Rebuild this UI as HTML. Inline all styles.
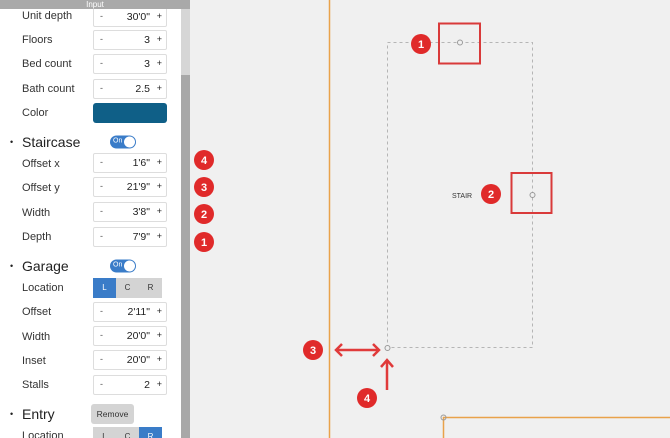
<!DOCTYPE html>
<html><head><style>
*{margin:0;padding:0;box-sizing:border-box}
body{width:670px;height:438px;overflow:hidden;background:#f0f0f0;font-family:"Liberation Sans",sans-serif;position:relative}
#side{position:absolute;left:0;top:0;width:181px;height:438px;background:#fff;overflow:hidden}
#sb{position:absolute;left:181px;top:9px;width:9px;height:429px;background:#d6d6d6}
#thumb{position:absolute;left:181px;top:75px;width:9px;height:363px;background:#a8a8a8}
#hdr{position:absolute;left:0;top:0;width:190px;height:9px;background:#a9a9a9;color:#fff;font-size:8px;line-height:9px;text-align:center}
.l{position:absolute;left:22px;font-size:11px;color:#333;transform:translateY(-50%)}
.h{position:absolute;left:22px;font-size:14px;color:#222;transform:translateY(-50%)}
.dot{position:absolute;left:10px;font-size:9px;color:#222;transform:translateY(-50%)}
.in{position:absolute;left:93px;width:74px;height:20px;border:1px solid #ddd;border-radius:2px;font-size:10.5px;color:#222;transform:translateY(-50%)}
.in .m{position:absolute;left:6px;top:3px;font-size:9px;color:#555}
.in .v{position:absolute;right:16px;top:3px}
.in .p{position:absolute;right:4px;top:3px;font-size:9px}
.tg{position:absolute;left:110px;width:26px;height:13px;border-radius:7px;background:#3a7cc8;transform:translateY(-50%)}
.tg span{position:absolute;left:3px;top:2px;font-size:7px;color:#fff}
.tg i{position:absolute;right:1px;top:1px;width:11px;height:11px;border-radius:50%;background:#fff}
.seg{position:absolute;left:93px;height:20px;display:flex;transform:translateY(-50%)}
.seg div{width:23px;height:20px;background:#d4d4d4;font-size:8px;color:#333;text-align:center;line-height:20px}
.seg .a{background:#3a7cc8;color:#fff}
</style></head><body>
<div id="side">
<div class="in" style="top:17px"><span class="m">-</span><span class="v">30'0"</span><span class="p">+</span></div>
<div class="l" style="top:16px">Unit depth</div>
<div class="l" style="top:40px">Floors</div><div class="in" style="top:40px"><span class="m">-</span><span class="v">3</span><span class="p">+</span></div>
<div class="l" style="top:64px">Bed count</div><div class="in" style="top:64px"><span class="m">-</span><span class="v">3</span><span class="p">+</span></div>
<div class="l" style="top:89px">Bath count</div><div class="in" style="top:89px"><span class="m">-</span><span class="v">2.5</span><span class="p">+</span></div>
<div class="l" style="top:113px">Color</div><div style="position:absolute;left:93px;top:103px;width:74px;height:20px;border-radius:3px;background:#0f5f87"></div>
<div class="dot" style="top:142px">•</div><div class="h" style="top:142px">Staircase</div><div class="tg" style="top:142px"><span>On</span><i></i></div>
<div class="l" style="top:164px">Offset x</div><div class="in" style="top:163px"><span class="m">-</span><span class="v">1'6"</span><span class="p">+</span></div>
<div class="l" style="top:188px">Offset y</div><div class="in" style="top:187px"><span class="m">-</span><span class="v">21'9"</span><span class="p">+</span></div>
<div class="l" style="top:213px">Width</div><div class="in" style="top:212px"><span class="m">-</span><span class="v">3'8"</span><span class="p">+</span></div>
<div class="l" style="top:237px">Depth</div><div class="in" style="top:237px"><span class="m">-</span><span class="v">7'9"</span><span class="p">+</span></div>
<div class="dot" style="top:266px">•</div><div class="h" style="top:266px">Garage</div><div class="tg" style="top:266px"><span>On</span><i></i></div>
<div class="l" style="top:288px">Location</div><div class="seg" style="top:288px"><div class="a">L</div><div>C</div><div>R</div></div>
<div class="l" style="top:312px">Offset</div><div class="in" style="top:312px"><span class="m">-</span><span class="v">2'11"</span><span class="p">+</span></div>
<div class="l" style="top:337px">Width</div><div class="in" style="top:336px"><span class="m">-</span><span class="v">20'0"</span><span class="p">+</span></div>
<div class="l" style="top:361px">Inset</div><div class="in" style="top:360px"><span class="m">-</span><span class="v">20'0"</span><span class="p">+</span></div>
<div class="l" style="top:385px">Stalls</div><div class="in" style="top:385px"><span class="m">-</span><span class="v">2</span><span class="p">+</span></div>
<div class="dot" style="top:414px">•</div><div class="h" style="top:414px">Entry</div>
<div style="position:absolute;left:91px;top:404px;width:43px;height:20px;border-radius:3px;background:#d4d4d4;font-size:8.5px;line-height:20px;text-align:center;color:#333">Remove</div>
<div class="l" style="top:436px">Location</div><div class="seg" style="top:437px"><div>L</div><div>C</div><div class="a">R</div></div>
</div>
<div id="sb"></div><div id="thumb"></div>
<div id="hdr">Input</div>
<svg style="position:absolute;left:0;top:0" width="670" height="438">
<line x1="329.5" y1="0" x2="329.5" y2="438" stroke="#e9a24a" stroke-width="1.5"/>
<polyline points="443.5,438 443.5,417.5 670,417.5" fill="none" stroke="#e9a24a" stroke-width="1.5"/>
<circle cx="443.5" cy="417.5" r="2.5" fill="none" stroke="#999"/>
<rect x="387.5" y="42.5" width="145" height="305" fill="none" stroke="#b5b5b5" stroke-dasharray="3,3"/>
<circle cx="460" cy="42.5" r="2.5" fill="#f0f0f0" stroke="#999"/>
<circle cx="532.5" cy="195" r="2.5" fill="#f0f0f0" stroke="#999"/>
<circle cx="387.5" cy="348" r="2.5" fill="#f0f0f0" stroke="#999"/>
<rect x="439" y="23.5" width="41" height="40" fill="none" stroke="#d93a3a" stroke-width="2"/>
<rect x="511.5" y="173" width="40" height="40" fill="none" stroke="#d93a3a" stroke-width="2"/>
<text x="452" y="198" font-size="7" font-family="Liberation Sans" fill="#333">STAIR</text>
<g stroke="#e03a3a" stroke-width="2.5" fill="none">
<line x1="336" y1="350" x2="379" y2="350"/><polyline points="342,344 336,350 342,356"/><polyline points="373,344 379,350 373,356"/>
<line x1="387" y1="390" x2="387" y2="361"/><polyline points="381,367 387,360 393,367"/>
</g>
<g font-family="Liberation Sans" font-weight="bold" font-size="11" fill="#fff" text-anchor="middle">
<circle cx="421" cy="44" r="10" fill="#e02a2a"/><text x="421" y="48">1</text>
<circle cx="491" cy="194" r="10" fill="#e02a2a"/><text x="491" y="198">2</text>
<circle cx="313" cy="350" r="10" fill="#e02a2a"/><text x="313" y="354">3</text>
<circle cx="367" cy="398" r="10" fill="#e02a2a"/><text x="367" y="402">4</text>
<circle cx="204" cy="160" r="10" fill="#e02a2a"/><text x="204" y="164">4</text>
<circle cx="204" cy="187" r="10" fill="#e02a2a"/><text x="204" y="191">3</text>
<circle cx="204" cy="214" r="10" fill="#e02a2a"/><text x="204" y="218">2</text>
<circle cx="204" cy="242" r="10" fill="#e02a2a"/><text x="204" y="246">1</text>
</g>
</svg>
</body></html>
